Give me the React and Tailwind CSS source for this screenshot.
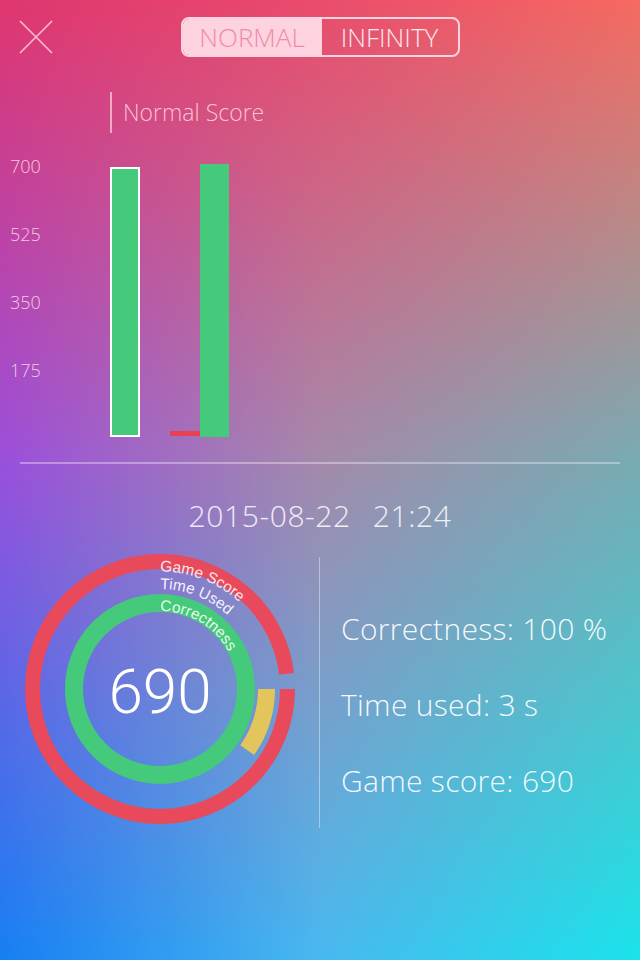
import React from 'react';

const yTicks = ['700', '525', '350', '175'];

function ScoreRings() {
    const c = 140;
    const arc = (r) => `M ${c} ${c - r} A ${r} ${r} 0 1 1 ${c} ${c + r} A ${r} ${r} 0 1 1 ${c} ${c - r}`;
    const redR = 127.5;
    const yellowR = 106.5;
    const redLen = 2 * Math.PI * redR;
    const yellowLen = 2 * Math.PI * yellowR;

    return (
        <svg width="280" height="280" viewBox="0 0 280 280" className="shrink-0">
            <defs>
                <path id="lblGame" d={arc(117.5)} />
                <path id="lblTime" d={arc(100)} />
                <path id="lblCorrect" d={arc(78)} />
            </defs>
            {/* game score */}
            <circle cx={c} cy={c} r={redR} fill="none" stroke="#e84a5b" strokeWidth="15"
                strokeDasharray={`${(353 / 360) * redLen} ${redLen}`} />
            {/* time used */}
            <circle cx={c} cy={c} r={yellowR} fill="none" stroke="#e2c65c" strokeWidth="17"
                strokeDasharray={`${(35 / 360) * yellowLen} ${yellowLen}`} />
            {/* correctness */}
            <circle cx={c} cy={c} r="86" fill="none" stroke="#45c97a" strokeWidth="18" />

            <g fontFamily="'Liberation Sans', Arial, sans-serif" fontSize="15.5">
                <text fill="#ffe4ea"><textPath href="#lblGame">Game Score</textPath></text>
                <text fill="#ffffff" fillOpacity="0.92"><textPath href="#lblTime">Time Used</textPath></text>
                <text fill="#e6fbe9"><textPath href="#lblCorrect">Correctness</textPath></text>
            </g>
            <text x={c} y="164" textAnchor="middle" fill="#ffffff" fontSize="62" fontWeight="300"
                fontFamily="Roboto, 'Liberation Sans', sans-serif">690</text>
        </svg>
    );
}

export default function App() {
    return (
        <div className="relative w-[640px] h-[960px] overflow-hidden font-['Open_Sans',sans-serif]">
            {/* background */}
            <div className="absolute inset-0 bg-[linear-gradient(to_right,#e0366f,#ea4c6c_50%,#f66a60)]" />
            <div className="absolute inset-0 bg-[linear-gradient(to_right,#9a4fdc,#a48aab_50%,#78abb3)] [mask-image:linear-gradient(to_bottom,transparent_0%,black_48%)]" />
            <div className="absolute inset-0 bg-[linear-gradient(to_right,#1580f3,#48b8f0_50%,#1ae3ea)] [mask-image:linear-gradient(to_bottom,transparent_48%,black_100%)]" />

            <div className="relative flex flex-col">
                {/* header */}
                <div className="grid grid-cols-[1fr_auto_1fr] items-center pt-[17px] h-[57px]">
                    <div className="pl-[19px]">
                        <svg width="34" height="34" viewBox="0 0 34 34">
                            <path d="M1 1 L33 33 M33 1 L1 33" stroke="#fcd6e0" strokeWidth="1.6" strokeOpacity="0.85" />
                        </svg>
                    </div>
                    <div className="flex w-[279px] h-[40px] rounded-[8px] border-2 border-[#fcd3de] overflow-hidden text-[26px] font-light leading-none">
                        <div className="w-[139px] flex items-center justify-center bg-[#fcd3de] text-[#f08caa]">NORMAL</div>
                        <div className="flex-1 flex items-center justify-center text-[#fde8ee]">INFINITY</div>
                    </div>
                    <div />
                </div>

                {/* chart title */}
                <div className="flex items-center h-[41px] mt-[35px] pl-[110px]">
                    <div className="w-[2px] h-full bg-[#f9c2d2]/80" />
                    <span className="ml-[11px] text-[23px] font-light text-[#fbd2de]/90">Normal Score</span>
                </div>

                {/* chart */}
                <div className="flex items-end h-[304px]">
                    <div className="self-start mt-[23px] w-[110px] pl-[10px] flex flex-col gap-[48px] text-[18px] font-light text-[#fcdbe8]/90">
                        {yTicks.map(t => (
                            <div key={t} className="h-[20px] leading-[20px]">{t}</div>
                        ))}
                    </div>
                    <div className="w-[30px] h-[270px] bg-[#45c97a] border-2 border-white" />
                    <div className="ml-[30px] w-[30px] h-[5px] mb-[1px] bg-[#e8414f]" />
                    <div className="w-[29px] h-[273px] bg-[#45c97a]" />
                </div>

                <div className="mt-[25px] mx-[20px] h-[2px] bg-white/35" />

                {/* date */}
                <div className="mt-[31px] h-[40px] flex items-center justify-center gap-[22px] text-[30px] font-light tracking-[0.02em] text-white/85">
                    <span>2015-08-22</span>
                    <span>21:24</span>
                </div>

                {/* result */}
                <div className="mt-[14px] flex h-[280px]">
                    <div className="pl-[20px] w-[319px]">
                        <ScoreRings />
                    </div>
                    <div className="w-px h-[271px] mt-[8px] bg-white/40" />
                    <div className="pl-[21px] pt-[41px] flex flex-col text-[30px] font-light tracking-[0.01em] text-white/95">
                        <div className="h-[76px] flex items-center">Correctness: 100 %</div>
                        <div className="h-[76px] flex items-center">Time used: 3 s</div>
                        <div className="h-[76px] flex items-center">Game score: 690</div>
                    </div>
                </div>
            </div>
        </div>
    );
}
